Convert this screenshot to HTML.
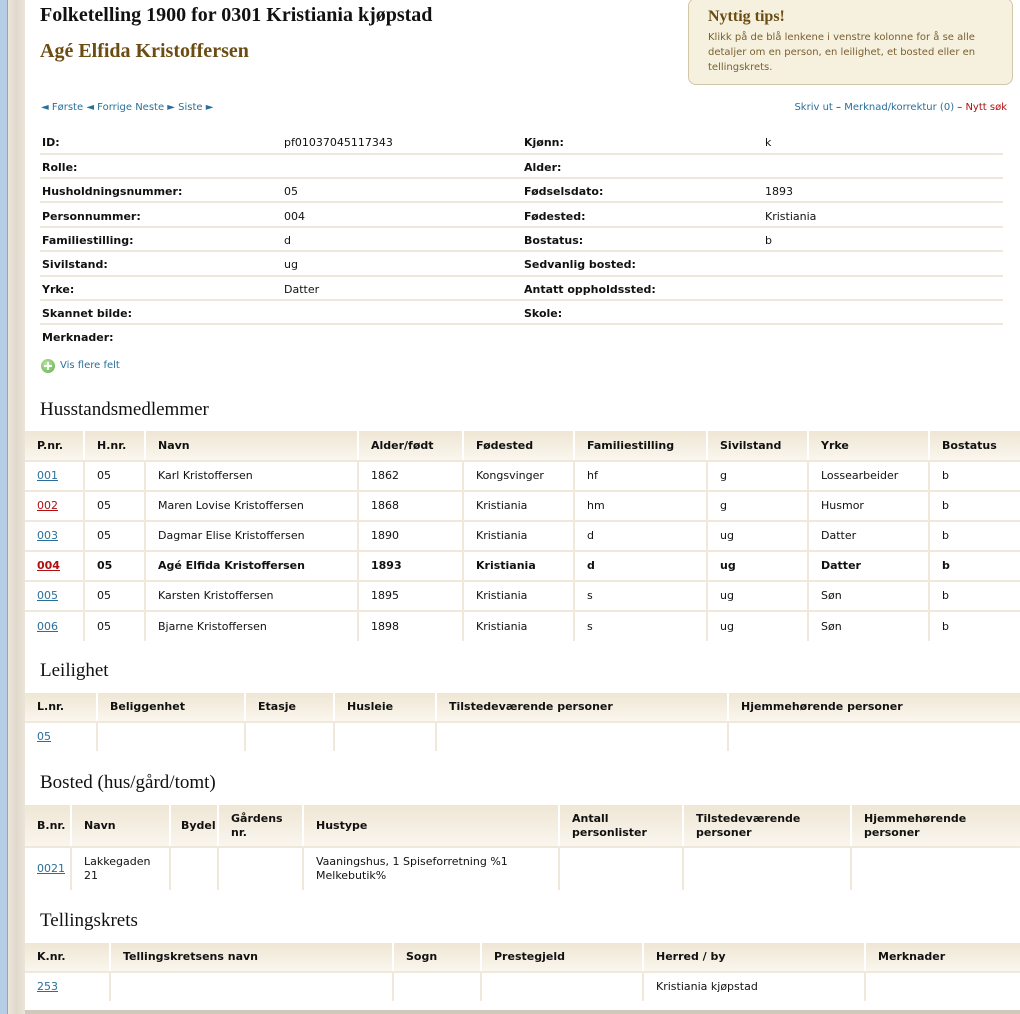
<!DOCTYPE html>
<html><head><meta charset="utf-8"><style>
*{margin:0;padding:0;box-sizing:border-box}
body{width:1020px;height:1014px;overflow:hidden;position:relative;background:#e4ddd0;font-family:"DejaVu Sans","Liberation Sans",sans-serif;font-size:11px;color:#111}
.strip{position:absolute;left:0;top:0;width:8px;height:1014px;background:#b7cde6;border-right:1px solid #8aa6c6}
.tex{position:absolute;left:8px;top:0;width:17px;height:1014px;background:linear-gradient(90deg,#ece6da,#e0d9cb,#ebe4d8)}
.page{position:absolute;left:25px;top:0;width:995px;height:1010px;background:#fff}
.bot{position:absolute;left:25px;top:1010px;width:995px;height:4px;background:#cfc8bb}
.a{position:absolute;white-space:nowrap}
h1{position:absolute;left:40px;top:4px;font:bold 20px "Liberation Serif",serif;color:#111}
h2{position:absolute;left:40px;top:40px;font:bold 20px "Liberation Serif",serif;color:#6b4c12}
h3{position:absolute;left:40px;font:normal 19px "Liberation Serif",serif;color:#111}
.tips{position:absolute;left:688px;top:-2px;width:325px;height:87px;background:#f6f0df;border:1px solid #d2c6a8;border-radius:8px}
.tips b{position:absolute;left:19px;top:9px;font:bold 16px "Liberation Serif",serif;color:#6b4c12}
.tips p{position:absolute;left:19px;top:31px;width:300px;font-size:10px;line-height:15px;color:#7a6030}
.lk{color:#2a6f9a}
.nav{font-size:10px}
.lbl{font-weight:bold}
.ln{position:absolute;height:2px;background:#eee8dc}
table{position:absolute;left:25px;border-collapse:collapse;table-layout:fixed}
th{background:linear-gradient(#efe6d4,#faf6ee);text-align:left;font-weight:bold;padding:0 0 0 12px;border-left:2px solid #fff;border-bottom:2px solid #f0e8da;vertical-align:middle;line-height:14px}
td{padding:0 0 0 12px;border-left:2px solid #f0e8da;border-bottom:2px solid #f0e8da;vertical-align:middle;line-height:14px}
th:first-child,td:first-child{border-left:none}
td a{color:#2a6f9a;text-decoration:underline}
tr.cur td{font-weight:bold}
</style></head><body>
<div class="strip"></div><div class="tex"></div><div class="page"></div><div class="bot"></div>
<h1>Folketelling 1900 for 0301 Kristiania kjøpstad</h1>
<h2>Agé Elfida Kristoffersen</h2>
<div class="tips"><b>Nyttig tips!</b><p>Klikk på de blå lenkene i venstre kolonne for å se alle detaljer om en person, en leilighet, et bosted eller en tellingskrets.</p></div>
<div class="a nav lk" style="left:41px;top:102px">◄ Første ◄ Forrige Neste ► Siste ►</div>
<div class="a nav" style="right:13px;top:102px"><span class="lk">Skriv ut</span> – <span class="lk">Merknad/korrektur (0)</span> – <span style="color:#b01010">Nytt søk</span></div>

<div class="a lbl" style="left:42px;top:136px">ID:</div><div class="a" style="left:284px;top:136px">pf01037045117343</div><div class="a lbl" style="left:524px;top:136px">Kjønn:</div><div class="a" style="left:765px;top:136px">k</div>
<div class="a lbl" style="left:42px;top:161px">Rolle:</div><div class="a lbl" style="left:524px;top:161px">Alder:</div>
<div class="a lbl" style="left:42px;top:185px">Husholdningsnummer:</div><div class="a" style="left:284px;top:185px">05</div><div class="a lbl" style="left:524px;top:185px">Fødselsdato:</div><div class="a" style="left:765px;top:185px">1893</div>
<div class="a lbl" style="left:42px;top:210px">Personnummer:</div><div class="a" style="left:284px;top:210px">004</div><div class="a lbl" style="left:524px;top:210px">Fødested:</div><div class="a" style="left:765px;top:210px">Kristiania</div>
<div class="a lbl" style="left:42px;top:234px">Familiestilling:</div><div class="a" style="left:284px;top:234px">d</div><div class="a lbl" style="left:524px;top:234px">Bostatus:</div><div class="a" style="left:765px;top:234px">b</div>
<div class="a lbl" style="left:42px;top:258px">Sivilstand:</div><div class="a" style="left:284px;top:258px">ug</div><div class="a lbl" style="left:524px;top:258px">Sedvanlig bosted:</div>
<div class="a lbl" style="left:42px;top:283px">Yrke:</div><div class="a" style="left:284px;top:283px">Datter</div><div class="a lbl" style="left:524px;top:283px">Antatt oppholdssted:</div>
<div class="a lbl" style="left:42px;top:307px">Skannet bilde:</div><div class="a lbl" style="left:524px;top:307px">Skole:</div>
<div class="a lbl" style="left:42px;top:331px">Merknader:</div>
<div class="ln" style="left:40px;top:153px;width:963px"></div>
<div class="ln" style="left:40px;top:177px;width:963px"></div>
<div class="ln" style="left:40px;top:201px;width:963px"></div>
<div class="ln" style="left:40px;top:226px;width:963px"></div>
<div class="ln" style="left:40px;top:250px;width:963px"></div>
<div class="ln" style="left:40px;top:275px;width:963px"></div>
<div class="ln" style="left:40px;top:299px;width:963px"></div>
<div class="ln" style="left:40px;top:323px;width:963px"></div>

<div class="a" style="left:41px;top:359px;width:14px;height:14px;border-radius:50%;background:radial-gradient(circle at 40% 35%,#b8e6a0,#5fae44);"><span style="position:absolute;left:3px;top:6px;width:8px;height:2px;background:#fff"></span><span style="position:absolute;left:6px;top:3px;width:2px;height:8px;background:#fff"></span></div>
<div class="a nav lk" style="left:60px;top:360px">Vis flere felt</div>

<h3 style="top:399px">Husstandsmedlemmer</h3>
<table style="top:431px;width:995px">
<colgroup><col style="width:59px"><col style="width:61px"><col style="width:213px"><col style="width:105px"><col style="width:111px"><col style="width:133px"><col style="width:101px"><col style="width:121px"><col style="width:91px"></colgroup>
<tr style="height:30px"><th>P.nr.</th><th>H.nr.</th><th>Navn</th><th>Alder/født</th><th>Fødested</th><th>Familiestilling</th><th>Sivilstand</th><th>Yrke</th><th>Bostatus</th></tr>
<tr style="height:30px"><td><a>001</a></td><td>05</td><td>Karl Kristoffersen</td><td>1862</td><td>Kongsvinger</td><td>hf</td><td>g</td><td>Lossearbeider</td><td>b</td></tr>
<tr style="height:30px"><td><a style="color:#b01010">002</a></td><td>05</td><td>Maren Lovise Kristoffersen</td><td>1868</td><td>Kristiania</td><td>hm</td><td>g</td><td>Husmor</td><td>b</td></tr>
<tr style="height:30px"><td><a>003</a></td><td>05</td><td>Dagmar Elise Kristoffersen</td><td>1890</td><td>Kristiania</td><td>d</td><td>ug</td><td>Datter</td><td>b</td></tr>
<tr style="height:30px" class="cur"><td><a style="color:#b01010">004</a></td><td>05</td><td>Agé Elfida Kristoffersen</td><td>1893</td><td>Kristiania</td><td>d</td><td>ug</td><td>Datter</td><td>b</td></tr>
<tr style="height:30px"><td><a>005</a></td><td>05</td><td>Karsten Kristoffersen</td><td>1895</td><td>Kristiania</td><td>s</td><td>ug</td><td>Søn</td><td>b</td></tr>
<tr style="height:30px"><td style="border-bottom:none"><a>006</a></td><td style="border-bottom:none">05</td><td style="border-bottom:none">Bjarne Kristoffersen</td><td style="border-bottom:none">1898</td><td style="border-bottom:none">Kristiania</td><td style="border-bottom:none">s</td><td style="border-bottom:none">ug</td><td style="border-bottom:none">Søn</td><td style="border-bottom:none">b</td></tr>
</table>

<h3 style="top:660px">Leilighet</h3>
<table style="top:693px;width:995px">
<colgroup><col style="width:72px"><col style="width:148px"><col style="width:89px"><col style="width:102px"><col style="width:292px"><col style="width:292px"></colgroup>
<tr style="height:29px"><th>L.nr.</th><th>Beliggenhet</th><th>Etasje</th><th>Husleie</th><th>Tilstedeværende personer</th><th>Hjemmehørende personer</th></tr>
<tr style="height:29px"><td style="border-bottom:none"><a>05</a></td><td style="border-bottom:none"></td><td style="border-bottom:none"></td><td style="border-bottom:none"></td><td style="border-bottom:none"></td><td style="border-bottom:none"></td></tr>
</table>

<h3 style="top:772px">Bosted (hus/gård/tomt)</h3>
<table style="top:805px;width:995px">
<colgroup><col style="width:46px"><col style="width:99px"><col style="width:48px"><col style="width:85px"><col style="width:256px"><col style="width:124px"><col style="width:168px"><col style="width:169px"></colgroup>
<tr style="height:42px"><th>B.nr.</th><th>Navn</th><th style="padding-left:10px">Bydel</th><th>Gårdens<br>nr.</th><th>Hustype</th><th>Antall<br>personlister</th><th>Tilstedeværende<br>personer</th><th>Hjemmehørende<br>personer</th></tr>
<tr style="height:43px"><td style="border-bottom:none"><a>0021</a></td><td style="border-bottom:none">Lakkegaden<br>21</td><td style="border-bottom:none"></td><td style="border-bottom:none"></td><td style="border-bottom:none">Vaaningshus, 1 Spiseforretning %1<br>Melkebutik%</td><td style="border-bottom:none"></td><td style="border-bottom:none"></td><td style="border-bottom:none"></td></tr>
</table>

<h3 style="top:910px">Tellingskrets</h3>
<table style="top:943px;width:995px">
<colgroup><col style="width:85px"><col style="width:283px"><col style="width:88px"><col style="width:162px"><col style="width:222px"><col style="width:155px"></colgroup>
<tr style="height:29px"><th>K.nr.</th><th>Tellingskretsens navn</th><th>Sogn</th><th>Prestegjeld</th><th>Herred / by</th><th>Merknader</th></tr>
<tr style="height:29px"><td style="border-bottom:none"><a>253</a></td><td style="border-bottom:none"></td><td style="border-bottom:none"></td><td style="border-bottom:none"></td><td style="border-bottom:none">Kristiania kjøpstad</td><td style="border-bottom:none"></td></tr>
</table>
</body></html>
